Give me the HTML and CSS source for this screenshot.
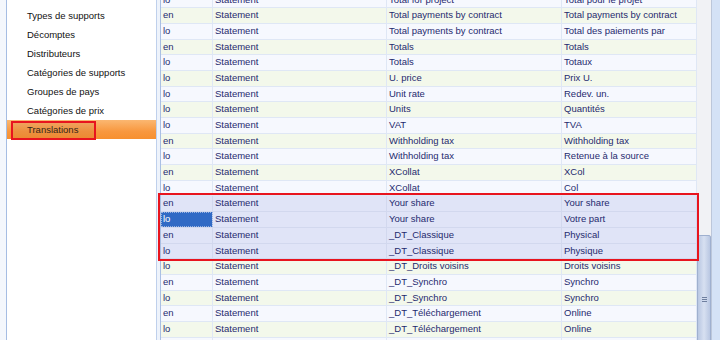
FILE: index.html
```html
<!DOCTYPE html>
<html lang="en">
<head>
  <meta charset="UTF-8">
  <title>Translations</title>
  <link rel="stylesheet" href="styles.css">
</head>
<body>

  <div class="window">
    <div class="gutter"></div>

    <!-- navigation list -->
    <div class="nav">
      <div class="nav-item">Types de supports</div>
      <div class="nav-item">Décomptes</div>
      <div class="nav-item">Distributeurs</div>
      <div class="nav-item">Catégories de supports</div>
      <div class="nav-item">Groupes de pays</div>
      <div class="nav-item">Catégories de prix</div>
      <div class="nav-item active">
        <span class="mark"></span>
        Translations
      </div>
    </div>
    <div class="split"></div>

    <!-- translations grid -->
    <div class="grid">
      <div class="rows" id="rows"></div>
    </div>

    <div class="scrollbar">
      <div class="thumb"><span class="grip"></span></div>
    </div>
    <div class="frame"></div>

    <!-- highlight round the selected rows -->
    <div class="mark-rows"></div>
  </div>

  <script>
    // lang, section, key, value, state
    const translations = [
      ['lo', 'Statement', 'Total for project', 'Total pour le projet'],
      ['en', 'Statement', 'Total payments by contract', 'Total payments by contract'],
      ['lo', 'Statement', 'Total payments by contract', 'Total des paiements par'],
      ['en', 'Statement', 'Totals', 'Totals'],
      ['lo', 'Statement', 'Totals', 'Totaux'],
      ['lo', 'Statement', 'U. price', 'Prix U.'],
      ['lo', 'Statement', 'Unit rate', 'Redev. un.'],
      ['lo', 'Statement', 'Units', 'Quantités'],
      ['lo', 'Statement', 'VAT', 'TVA'],
      ['en', 'Statement', 'Withholding tax', 'Withholding tax'],
      ['lo', 'Statement', 'Withholding tax', 'Retenue à la source'],
      ['en', 'Statement', 'XCollat', 'XCol'],
      ['lo', 'Statement', 'XCollat', 'Col'],
      ['en', 'Statement', 'Your share', 'Your share', 'sel'],
      ['lo', 'Statement', 'Your share', 'Votre part', 'focus'],
      ['en', 'Statement', '_DT_Classique', 'Physical', 'sel'],
      ['lo', 'Statement', '_DT_Classique', 'Physique', 'sel'],
      ['lo', 'Statement', '_DT_Droits voisins', 'Droits voisins'],
      ['en', 'Statement', '_DT_Synchro', 'Synchro'],
      ['lo', 'Statement', '_DT_Synchro', 'Synchro'],
      ['en', 'Statement', '_DT_Téléchargement', 'Online'],
      ['lo', 'Statement', '_DT_Téléchargement', 'Online'],
      ['', '', '', '']
    ];

    const rows = document.getElementById('rows');
    translations.forEach((t, index) => {
      const row = document.createElement('div');
      row.className = 'row' + (index % 2 ? ' odd' : '');
      if (t[4]) row.className += ' sel';

      for (let i = 0; i < 4; i++) {
        const cell = document.createElement('div');
        cell.className = 'cell';
        if (i === 0 && t[4] === 'focus') cell.className += ' focus';
        cell.textContent = t[i];
        row.appendChild(cell);
      }
      rows.appendChild(row);
    });
  </script>

</body>
</html>
```

FILE: styles.css
```css
body {
  margin: 0;
  overflow: hidden;
  font-family: 'Liberation Sans', Arial, sans-serif;
  font-size: 9.5px;
}
.window {
  position: relative;
  display: flex;
  height: 340px;
  width: 720px;
  background-color: #fff;
}
.gutter {
  width: 6px;
  background-color: #f4f7fc;
  border-right: 1px solid #a6bde3;
}
.nav {
  width: 149px;
  padding-top: 6px;
  background-color: #fff;
  border-right: 1px solid #bfd0ec;
}
.nav-item {
  position: relative;
  height: 19px;
  line-height: 19px;
  padding-left: 20px;
  color: #111;
}
.nav-item.active {
  background: linear-gradient(#fbb771, #f8983f 60%, #f7902f);
}
.nav-item .mark {
  position: absolute;
  left: 4px;
  top: 1px;
  width: 85px;
  height: 19px;
  box-sizing: border-box;
  border: 2px solid #e8141e;
  background-color: rgba(190, 110, 60, 0.18);
}
.split {
  width: 3px;
  background-color: #eef3fb;
}
.grid {
  width: 536px;
  overflow: hidden;
  border-left: 1px solid #a9bfe3;
}
.rows {
  margin-top: -7.5px;
}
.row {
  display: grid;
  grid-template-columns: 52px 174px 175px 135px;
  height: 15.7px;
  box-sizing: border-box;
  border-bottom: 1px solid #dfe7f5;
  background-color: #f6f8fe;
  color: #1f2a6e;
}
.row.odd {
  background-color: #f3f8eb;
}
.row.sel {
  background-color: #e0e4f7;
  border-bottom-color: #d2d8ee;
}
.cell {
  padding-left: 2px;
  line-height: 14.7px;
  border-right: 1px solid #dfe7f5;
  white-space: nowrap;
  overflow: hidden;
}
.row.sel .cell {
  border-right-color: #d2d8ee;
}
.cell.focus {
  background-color: #316ac5;
  color: #fff;
  outline: 1px dotted #9bb4e0;
  outline-offset: -1px;
}
.mark-rows {
  position: absolute;
  top: 193px;
  left: 158px;
  width: 541px;
  height: 68px;
  box-sizing: border-box;
  border: 2px solid #e8141e;
}
.scrollbar {
  position: relative;
  width: 14px;
  background-color: #f1f2f5;
  border-right: 1px solid #bcc7da;
}
.thumb {
  position: absolute;
  top: 235px;
  left: 0;
  width: 14px;
  height: 120px;
  box-sizing: border-box;
  border: 1px solid #9fb0cf;
  border-radius: 2px;
  background: linear-gradient(to right, #b9c7e2, #d7e0f1 50%, #b9c7e2);
}
.grip {
  position: absolute;
  top: 61px;
  left: 4px;
  width: 5px;
  height: 5px;
  background: repeating-linear-gradient(#6f7f9f 0 1px, transparent 1px 2px);
}
.frame {
  flex: 1;
  background-color: #d4e2f6;
}
```
